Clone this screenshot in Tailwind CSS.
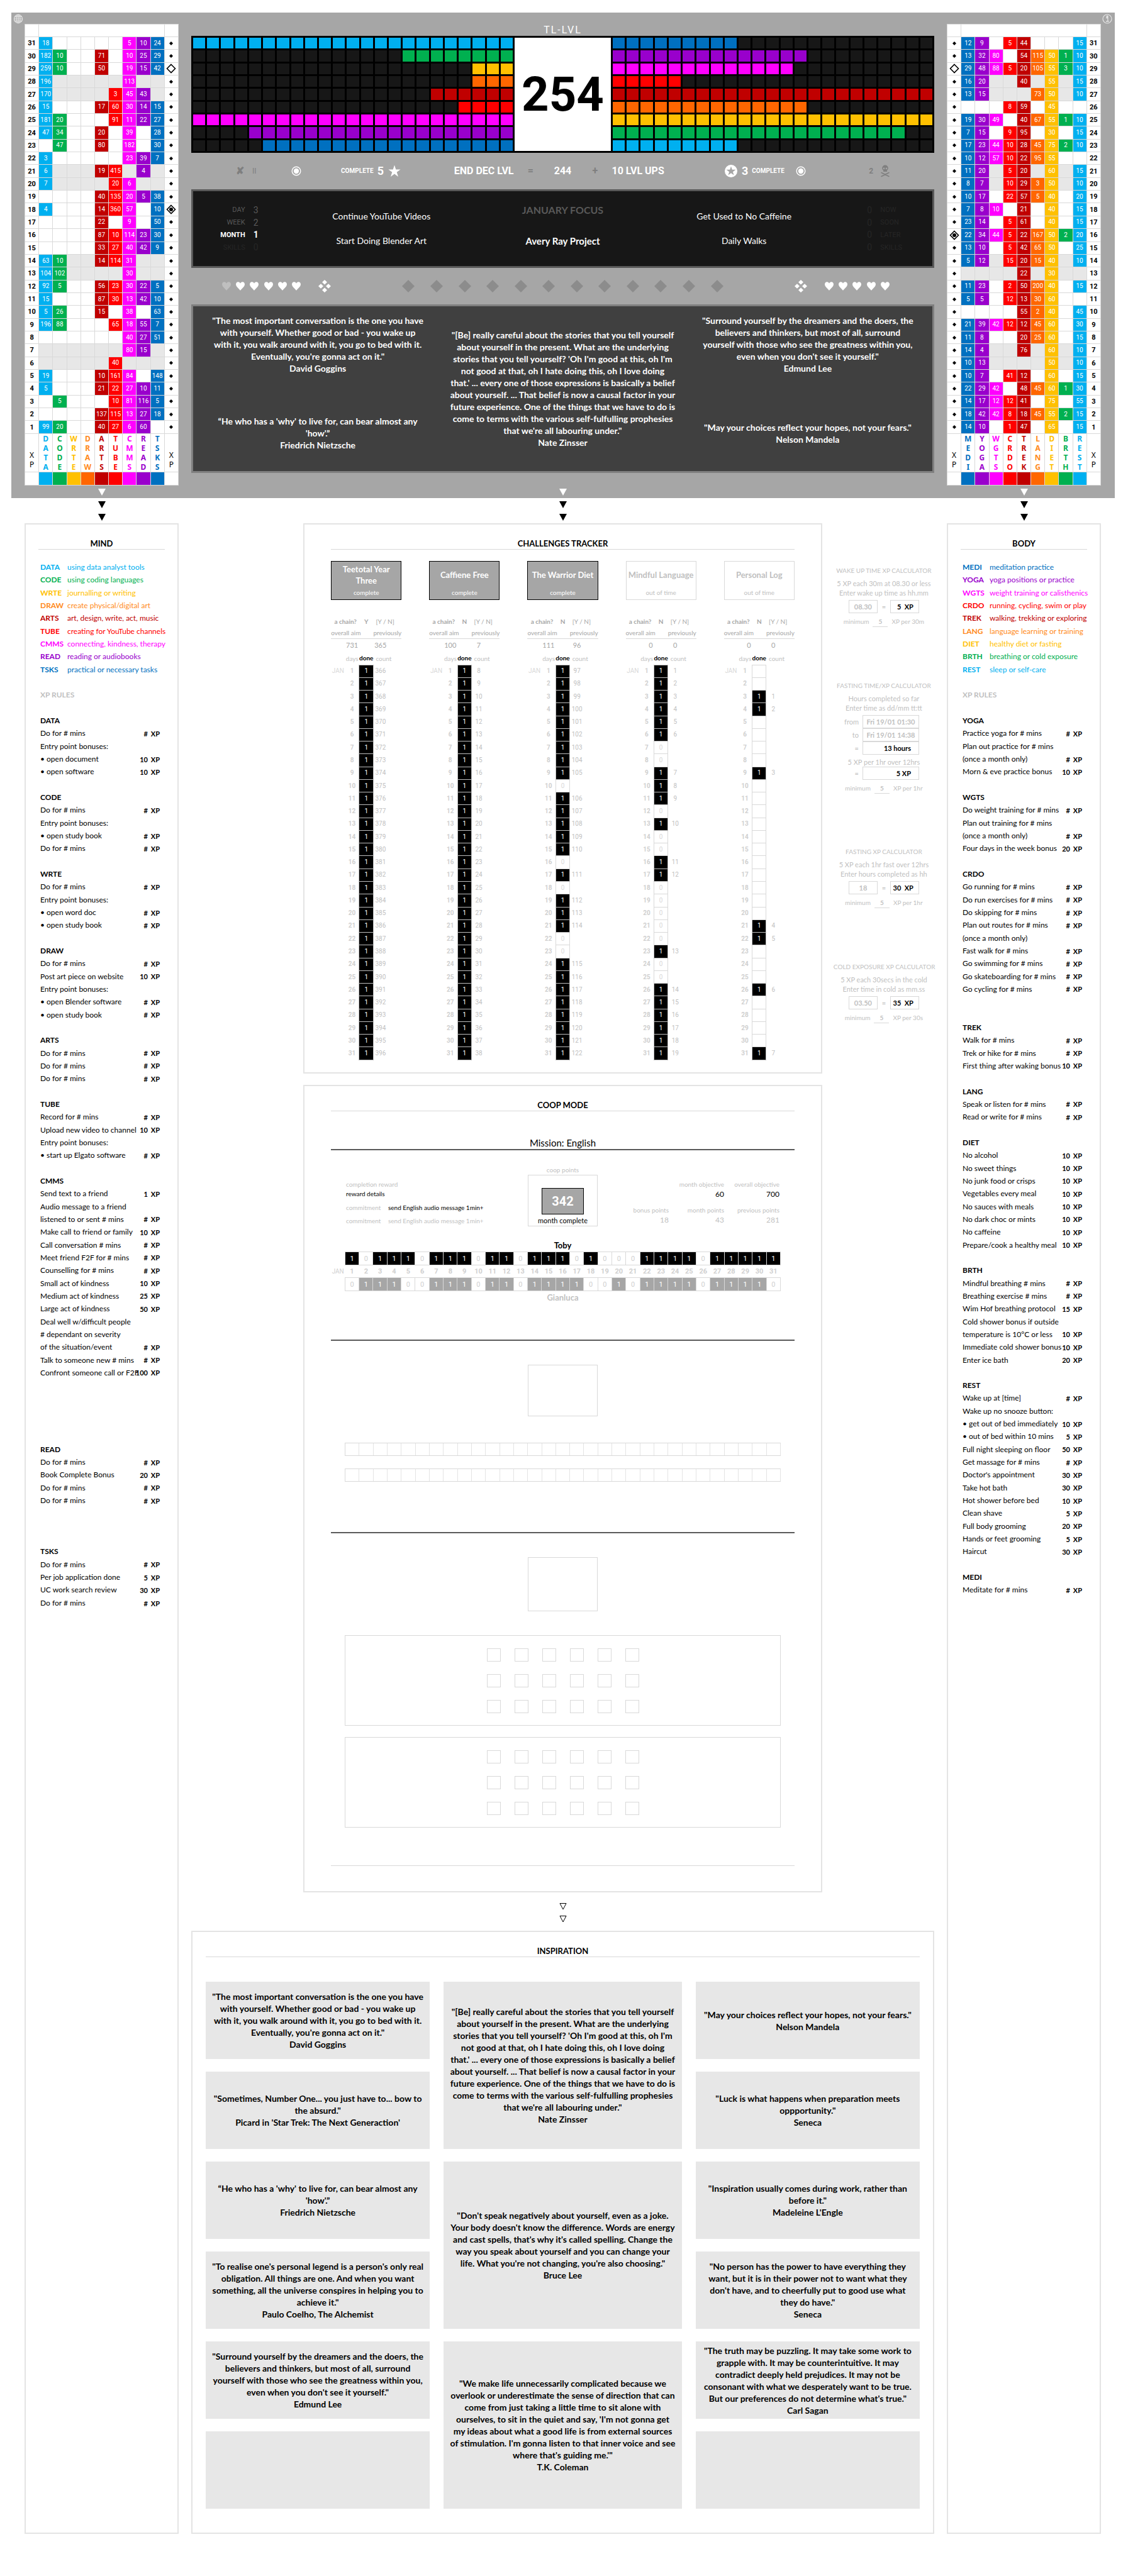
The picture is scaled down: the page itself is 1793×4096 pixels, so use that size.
<!DOCTYPE html>
<html lang="en">
<head>
<meta charset="utf-8">
<title>TL-LVL Dashboard</title>
<script src="https://cdn.jsdelivr.net/npm/@tailwindcss/browser@4"></script>
</head>
<body class="bg-white font-['Lato','Noto_Sans',sans-serif] text-black">
<main class="pt-5 pr-[21px] pl-[18px] pb-[68px]">

  <header class="bg-[#a6a6a6] pl-[21px] pr-[22px]">
    <div class="grid grid-cols-[245fr_1181fr_245fr] gap-x-5">
      <div class="relative pt-[18px]">
        <svg class="absolute -left-[18px] top-[2px] size-4 stroke-[#e4e4e4] fill-none" viewBox="0 0 16 16" stroke-width="1.2"><circle cx="8" cy="8" r="6.6"/><ellipse cx="8" cy="8" rx="3" ry="6.6"/><path d="M8 1.4v13.2M1.4 8h13.2M2.5 4.6h11M2.5 11.4h11"/></svg>
        <table id="mindHeat" class="h-[734px] w-full table-fixed border-collapse bg-white text-center font-['Roboto',sans-serif] text-[10px] leading-none"></table>
      </div>

      <div class="pt-[18px]">
        <p class="flex h-[19px] items-center justify-center font-['Roboto',sans-serif] text-base leading-none tracking-[2px] text-white">TL-LVL</p>
        <section class="grid h-[186px] grid-cols-[514fr_153fr_514fr] bg-black" aria-label="Level progress">
          <div id="mindBars" class="grid grid-cols-[repeat(23,minmax(0,1fr))] gap-[3px] p-[3px]"></div>
          <div class="my-[3px] flex items-center justify-center bg-white font-['Roboto',sans-serif] text-[76px] font-bold leading-none">254</div>
          <div id="bodyBars" class="grid grid-cols-[repeat(23,minmax(0,1fr))] gap-[3px] p-[3px]"></div>
        </section>

        <div class="grid h-[58px] grid-cols-[repeat(53,minmax(0,1fr))] items-center whitespace-nowrap font-['Roboto',sans-serif] text-base font-bold leading-none text-white">
          <span class="col-start-4 row-start-1 justify-self-center text-[#7f7f7f]">✘</span>
          <span class="col-start-5 row-start-1 justify-self-center text-xs font-normal text-[#7f7f7f]">II</span>
          <svg class="col-start-8 row-start-1 size-4 justify-self-center" viewBox="0 0 16 16"><circle cx="8" cy="8" r="6.8" fill="none" stroke="#fff" stroke-width="1.4"/><circle cx="8" cy="8" r="4.2" fill="#fff"/></svg>
          <span class="col-span-2 col-start-12 row-start-1 justify-self-end text-[10px]">COMPLETE</span>
          <span class="col-start-14 row-start-1 justify-self-center text-lg leading-none">5</span>
          <svg class="col-start-15 row-start-1 size-5 justify-self-center fill-white" viewBox="0 0 20 20"><path d="M10 .5l2.300 7h7.300l-5.900 4.300 2.300 7.200L10 14.600 4 19l2.300-7.200L.4 7.500h7.300z"/></svg>
          <span class="col-span-5 col-start-19 row-start-1 justify-self-end">END DEC LVL</span>
          <span class="col-start-25 row-start-1 justify-self-start text-[#7f7f7f]">=</span>
          <span class="col-span-3 col-start-26 row-start-1 justify-self-center">244</span>
          <span class="col-start-29 row-start-1 justify-self-end text-[#7f7f7f]">+</span>
          <span class="col-span-5 col-start-31 row-start-1">10 LVL UPS</span>
          <svg class="col-start-39 row-start-1 size-5 justify-self-center" viewBox="0 0 20 20"><circle cx="10" cy="10" r="10" fill="#fff"/><path fill="#a6a6a6" d="M10 2.400l1.800 5.400h5.700l-4.600 3.400 1.700 5.400-4.600-3.300-4.600 3.300 1.700-5.400-4.600-3.400h5.700z"/></svg>
          <span class="col-start-40 row-start-1 justify-self-center text-lg leading-none">3</span>
          <span class="col-span-2 col-start-41 row-start-1 text-[10px]">COMPLETE</span>
          <svg class="col-start-44 row-start-1 size-4 justify-self-center" viewBox="0 0 16 16"><circle cx="8" cy="8" r="6.8" fill="none" stroke="#fff" stroke-width="1.4"/><circle cx="8" cy="8" r="4.2" fill="#fff"/></svg>
          <span class="col-start-49 row-start-1 justify-self-center text-xs text-[#7f7f7f]">2</span>
          <svg class="col-start-50 row-start-1 h-5 w-4 justify-self-center" viewBox="0 0 16 20" fill="#7f7f7f"><path d="M8 .5a4.800 4.800 0 0 0-4.800 4.800c0 1.600.7 2.800 1.900 3.600V11h5.800V8.900c1.200-.8 1.900-2 1.900-3.600A4.800 4.800 0 0 0 8 .5zM6 4.600a1.300 1.300 0 1 1 0 2.600 1.300 1.300 0 0 1 0-2.600zm4 0a1.300 1.300 0 1 1 0 2.600 1.300 1.300 0 0 1 0-2.600z" fill-rule="evenodd"/><path d="M2 12.500l12 6M14 12.500l-12 6" stroke="#7f7f7f" stroke-width="1.600" stroke-linecap="round"/></svg>
        </div>

        <section class="grid h-[125px] grid-cols-[repeat(53,minmax(0,1fr))] grid-rows-4 items-center whitespace-nowrap border-[3px] border-[#595959] bg-[#171717] py-5 text-white" aria-label="Focus">
          <span class="col-span-4 col-start-1 row-start-1 justify-self-end pr-1.5 font-['Roboto',sans-serif] text-[11px] leading-none text-[#595959]">DAY</span>
          <span class="col-start-5 row-start-1 justify-self-center font-['Roboto',sans-serif] text-sm leading-none text-[#595959]">3</span>
          <span class="col-span-4 col-start-1 row-start-2 justify-self-end pr-1.5 font-['Roboto',sans-serif] text-[11px] leading-none text-[#595959]">WEEK</span>
          <span class="col-start-5 row-start-2 justify-self-center font-['Roboto',sans-serif] text-sm leading-none text-[#595959]">2</span>
          <span class="col-span-4 col-start-1 row-start-3 justify-self-end pr-1.5 font-['Roboto',sans-serif] text-[11px] font-bold leading-none">MONTH</span>
          <span class="col-start-5 row-start-3 justify-self-center font-['Roboto',sans-serif] text-sm font-bold leading-none">1</span>
          <span class="col-span-4 col-start-1 row-start-4 justify-self-end pr-1.5 font-['Roboto',sans-serif] text-[11px] leading-none text-[#262626]">SKILLS</span>
          <span class="col-start-5 row-start-4 justify-self-center font-['Roboto',sans-serif] text-sm leading-none text-[#262626]">0</span>
          <span class="col-span-13 col-start-8 row-span-2 row-start-1 justify-self-center text-sm">Continue YouTube Videos</span>
          <span class="col-span-13 col-start-8 row-span-2 row-start-3 justify-self-center text-sm">Start Doing Blender Art</span>
          <h2 class="col-span-13 col-start-21 row-start-1 justify-self-center text-base font-bold leading-none text-[#595959]">JANUARY FOCUS</h2>
          <strong class="col-span-13 col-start-21 row-span-2 row-start-3 justify-self-center text-[15px]">Avery Ray Project</strong>
          <span class="col-span-13 col-start-34 row-span-2 row-start-1 justify-self-center text-sm">Get Used to No Caffeine</span>
          <span class="col-span-13 col-start-34 row-span-2 row-start-3 justify-self-center text-sm">Daily Walks</span>
          <span class="col-start-49 row-start-1 justify-self-center font-['Roboto',sans-serif] text-sm leading-none text-[#262626]">0</span>
          <span class="col-span-4 col-start-50 row-start-1 pl-1.5 font-['Roboto',sans-serif] text-[11px] leading-none text-[#262626]">NOW</span>
          <span class="col-start-49 row-start-2 justify-self-center font-['Roboto',sans-serif] text-sm leading-none text-[#262626]">0</span>
          <span class="col-span-4 col-start-50 row-start-2 pl-1.5 font-['Roboto',sans-serif] text-[11px] leading-none text-[#262626]">SOON</span>
          <span class="col-start-49 row-start-3 justify-self-center font-['Roboto',sans-serif] text-sm leading-none text-[#262626]">0</span>
          <span class="col-span-4 col-start-50 row-start-3 pl-1.5 font-['Roboto',sans-serif] text-[11px] leading-none text-[#262626]">LATER</span>
          <span class="col-start-49 row-start-4 justify-self-center font-['Roboto',sans-serif] text-sm leading-none text-[#262626]">0</span>
          <span class="col-span-4 col-start-50 row-start-4 pl-1.5 font-['Roboto',sans-serif] text-[11px] leading-none text-[#262626]">SKILLS</span>
        </section>

        <div id="hearts" class="grid h-[58px] grid-cols-[repeat(53,minmax(0,1fr))] place-items-center"></div>

        <section id="pinned" class="grid h-[268px] grid-cols-[16fr_17fr_16fr] grid-rows-2 gap-x-[22px] gap-y-5 border-[3px] border-[#7f7f7f] bg-[#404040] px-5 text-center text-sm font-bold leading-[19px] text-white"></section>
      </div>

      <div class="relative pt-[18px]">
        <svg class="absolute -right-[18px] top-[2px] size-4" viewBox="0 0 16 16"><circle cx="8" cy="8" r="7" fill="none" stroke="#e4e4e4" stroke-width="1.200"/><path d="M6.200 6.500h2.700v5.300M6 12h4.600M7.300 3.500h1.600v1.600H7.300z" fill="none" stroke="#e4e4e4" stroke-width="1.300"/></svg>
        <table id="bodyHeat" class="h-[734px] w-full table-fixed border-collapse bg-white text-center font-['Roboto',sans-serif] text-[10px] leading-none"></table>
      </div>
    </div>
    <div class="grid h-5 grid-cols-[245fr_1181fr_245fr] place-items-center gap-x-5 fill-white">
      <svg class="h-[11px] w-3" viewBox="0 0 12 11"><path d="M0 0h12L6 11z"/></svg>
      <svg class="h-[11px] w-3" viewBox="0 0 12 11"><path d="M0 0h12L6 11z"/></svg>
      <svg class="h-[11px] w-3" viewBox="0 0 12 11"><path d="M0 0h12L6 11z"/></svg>
    </div>
  </header>

  <div class="grid h-10 grid-cols-[245fr_1181fr_245fr] grid-rows-2 place-items-center gap-x-5 pl-[21px] pr-[22px]">
    <svg class="h-[11px] w-3" viewBox="0 0 12 11"><path d="M0 0h12L6 11z"/></svg>
    <svg class="h-[11px] w-3" viewBox="0 0 12 11"><path d="M0 0h12L6 11z"/></svg>
    <svg class="h-[11px] w-3" viewBox="0 0 12 11"><path d="M0 0h12L6 11z"/></svg>
    <svg class="h-[11px] w-3" viewBox="0 0 12 11"><path d="M0 0h12L6 11z"/></svg>
    <svg class="h-[11px] w-3" viewBox="0 0 12 11"><path d="M0 0h12L6 11z"/></svg>
    <svg class="h-[11px] w-3" viewBox="0 0 12 11"><path d="M0 0h12L6 11z"/></svg>
  </div>

  <div class="grid grid-cols-[245fr_1181fr_245fr] gap-x-5 pl-[21px] pr-[22px]">
    <section class="border-2 border-[#e4e4e4] px-5 pt-[22px] text-xs">
      <h2 class="h-[18px] border-b border-[#d9d9d9] text-center text-[13px] font-bold leading-[16px]">MIND</h2>
      <table id="mindRules" class="mt-[18px] h-[1668px] w-full table-fixed border-collapse leading-none"></table>
    </section>

    <div class="flex flex-col">
      <div class="grid grid-cols-[minmax(0,178fr)_minmax(0,824fr)_minmax(0,178fr)]">
        <section class="col-start-2 h-[875px] border-2 border-[#e4e4e4] px-[42px] pt-[22px]">
          <h2 class="h-[18px] border-b border-[#d9d9d9] text-center text-[13px] font-bold leading-[16px]">CHALLENGES TRACKER</h2>
          <div id="challenges" class="mt-[18px] grid grid-cols-[repeat(5,minmax(0,1fr))] gap-x-11"></div>
        </section>
        <aside id="calcs" class="pl-[18px] pt-[66px] text-center text-[11px] leading-[15px] text-[#bfbfbf]"></aside>
      </div>

      <section class="mx-[178px] mt-[18px] h-[1284px] border-2 border-[#e4e4e4] px-[42px] pt-[22px]">
        <h2 class="h-[18px] border-b border-[#d9d9d9] text-center text-[13px] font-bold leading-[16px]">COOP MODE</h2>
        <h3 class="mt-[42px] h-[20px] border-b-2 border-[#595959] text-center text-[15px] leading-[17px]">Mission: English</h3>
        <div class="mt-[24px] grid grid-cols-[minmax(0,290fr)_111px_minmax(0,290fr)] px-[24px] text-[10px] leading-[15px]">
          <div class="pt-[23px] text-[#bfbfbf]">
            <p>completion reward</p>
            <p class="text-black">reward details</p>
            <p class="mt-[7px] flex gap-3 whitespace-nowrap"><span class="w-[55px]">commitment</span><span class="text-black">send English audio message 1min+</span></p>
            <p class="mt-[6px] flex gap-3 whitespace-nowrap"><span class="w-[55px]">commitment</span><span>send English audio message 1min+</span></p>
          </div>
          <div class="text-center">
            <p class="text-[#bfbfbf]">coop points</p>
            <div class="flex h-[82px] flex-col items-center border border-[#d9d9d9] pt-5">
              <p class="flex h-[42px] w-[67px] items-center justify-center border border-black bg-[#a6a6a6] font-['Roboto',sans-serif] text-xl font-bold text-white">342</p>
              <p class="mt-[2px] text-[11px]">month complete</p>
            </div>
          </div>
          <dl class="grid grid-cols-[1fr_88px_88px] content-start whitespace-nowrap pt-[23px] text-right text-[#bfbfbf]">
            <dt class="col-start-2">month objective</dt><dt>overall objective</dt>
            <dd class="col-start-2 text-xs leading-[15px] text-black">60</dd><dd class="text-xs leading-[15px] text-black">700</dd>
            <dt class="mt-[11px]">bonus points</dt><dt class="mt-[11px]">month points</dt><dt class="mt-[11px]">previous points</dt>
            <dd class="text-xs leading-[15px]">18</dd><dd class="text-xs leading-[15px]">43</dd><dd class="text-xs leading-[15px]">281</dd>
          </dl>
        </div>
        <table class="mt-[21px] w-full table-fixed border-collapse text-center font-['Roboto',sans-serif] text-[11px] leading-none">
          <caption class="h-[19px] font-['Lato',sans-serif] text-[13px] font-bold leading-[19px]">Toby</caption>
          <tbody id="coop"></tbody>
        </table>
        <p class="mt-[1px] text-center text-[13px] font-bold leading-[18px] text-[#bfbfbf]">Gianluca</p>
        <hr class="mt-[58px] border-t-2 border-[#595959]">
        <div class="mx-auto mt-[38px] h-[82px] w-[111px] border border-[#d9d9d9]"></div>
        <div class="mx-[22px] mt-[42px] grid h-[21px] grid-cols-[repeat(31,minmax(0,1fr))] border-y border-l border-[#d9d9d9]" data-cells="31"></div>
        <div class="mx-[22px] mt-[20px] grid h-[21px] grid-cols-[repeat(31,minmax(0,1fr))] border-y border-l border-[#d9d9d9]" data-cells="31"></div>
        <hr class="mt-[80px] border-t-2 border-[#595959]">
        <div class="mx-auto mt-[38px] h-[86px] w-[111px] border border-[#d9d9d9]"></div>
        <div class="mx-[22px] mt-[38px] grid h-[144px] grid-cols-[repeat(6,22px)] content-center justify-center gap-x-[22px] gap-y-[20px] border border-[#d9d9d9]" data-boxes="18"></div>
        <div class="mx-[22px] mt-[18px] grid h-[144px] grid-cols-[repeat(6,22px)] content-center justify-center gap-x-[22px] gap-y-[20px] border border-[#d9d9d9]" data-boxes="18"></div>
        <hr class="mt-[60px] border-t border-[#d9d9d9]">
      </section>

      <div class="flex h-[61px] flex-col items-center justify-center gap-[9px] pt-1">
        <svg class="h-[11px] w-3 fill-none stroke-black" viewBox="0 0 12 11"><path d="M1 .5h10L6 10z"/></svg>
        <svg class="h-[11px] w-3 fill-none stroke-black" viewBox="0 0 12 11"><path d="M1 .5h10L6 10z"/></svg>
      </div>

      <section class="flex-1 border-2 border-[#e4e4e4] px-[21px] pb-[38px] pt-[22px]">
        <h2 class="h-[18px] border-b border-[#d9d9d9] text-center text-[13px] font-bold leading-[16px]">INSPIRATION</h2>
        <div id="inspiration" class="mt-[39px] grid grid-cols-[16fr_17fr_16fr] grid-rows-[repeat(6,123px)] gap-x-[22px] gap-y-[20px] text-center text-sm font-bold leading-[19px]"></div>
      </section>
    </div>

    <section class="border-2 border-[#e4e4e4] px-5 pt-[22px] text-xs">
      <h2 class="h-[18px] border-b border-[#d9d9d9] text-center text-[13px] font-bold leading-[16px]">BODY</h2>
      <table id="bodyRules" class="mt-[18px] h-[1668px] w-full table-fixed border-collapse leading-none"></table>
    </section>
  </div>
</main>

<script>
const $ = id => document.getElementById(id);
const BG = {blue:'bg-[#00b0f0]',green:'bg-[#00b050]',gold:'bg-[#ffc000]',orange:'bg-[#ff6600]',maroon:'bg-[#c00000]',red:'bg-[#ff0000]',pink:'bg-[#ff00ff]',purple:'bg-[#9900cc]',navy:'bg-[#0070c0]'};
const FG = {blue:'text-[#00b0f0]',green:'text-[#00b050]',gold:'text-[#ffc000]',orange:'text-[#ff8a20]',maroon:'text-[#c00000]',red:'text-[#ff0000]',pink:'text-[#ff00ff]',purple:'text-[#9900cc]',navy:'text-[#0070c0]'};
const mindCols = [['DATA','blue','using data analyst tools'],['CODE','green','using coding languages'],['WRTE','gold','journalling or writing'],['DRAW','orange','create physical/digital art'],['ARTS','maroon','art, design, write, act, music'],['TUBE','red','creating for YouTube channels'],['CMMS','pink','connecting, kindness, therapy'],['READ','purple','reading or audiobooks'],['TSKS','navy','practical or necessary tasks']];
const bodyCols = [['MEDI','navy','meditation practice'],['YOGA','purple','yoga positions or practice'],['WGTS','pink','weight training or calisthenics'],['CRDO','red','running, cycling, swim or play'],['TREK','maroon','walking, trekking or exploring'],['LANG','orange','language learning or training'],['DIET','gold','healthy diet or fasting'],['BRTH','green','breathing or cold exposure'],['REST','blue','sleep or self-care']];
const mindXP = `18 . . . . . 5 10 24
182 10 . . 71 . 10 25 29
259 10 . . 50 . 19 15 42
196 . . . . . 113 . .
170 . . . . 3 45 43 .
15 . . . 17 60 30 14 15
181 20 . . . 91 11 22 27
47 34 . . 20 . 39 . 28
. 47 . . 80 . 182 . 30
3 . . . . . 23 39 7
6 . . . 19 415 . 4 .
7 . . . . 20 6 . .
. . . . 40 135 20 5 38
4 . . . 14 360 57 . 10
. . . . 22 . 9 . 50
. . . . 87 10 114 23 30
. . . . 33 27 40 42 9
63 10 . . 14 114 31 . .
104 102 . . . . 30 . .
92 5 . . 56 23 30 22 5
15 . . . 87 30 13 42 10
5 26 . . 15 . 38 . 63
196 88 . . . 65 18 55 7
. . . . . . 40 27 51
. . . . . . 80 15 .
. . . . . 40 . . .
19 . . . 10 161 84 . 148
5 . . . 21 22 27 10 11
. 5 . . . 10 81 116 5
. . . . 137 115 13 27 18
99 20 . . 40 27 6 60 .`;
const bodyXP = `12 9 . 5 44 . . . 15
13 32 80 . 54 115 50 1 10
29 48 88 5 20 105 55 3 10
16 20 . . 40 . 55 . 15
13 15 . . . 73 50 . 10
. . . 8 59 . 45 . .
19 30 49 . 40 67 55 1 10
7 15 . 9 95 . 30 . 15
17 23 44 10 28 45 75 2 10
10 12 57 10 22 95 55 . .
11 20 . 5 20 . 60 . 15
8 7 . 10 29 3 50 . 10
10 17 . 22 57 5 40 . 20
7 8 10 . 21 . 40 . 15
23 14 . 5 61 . 40 . 15
22 34 44 5 22 167 50 2 20
13 10 . 5 42 65 50 . 25
5 12 . 15 20 15 40 . 10
. . . . 22 . 30 . .
11 23 . 2 50 200 40 . 15
5 5 . 12 13 30 60 . .
. . . . 55 2 40 . 45
21 39 42 12 12 45 60 . 30
11 8 . . 20 25 60 . 15
14 4 . . 76 . 60 . 10
10 13 . . . . 50 . 10
10 7 . 41 12 . 60 . 15
22 29 42 . 48 45 60 1 30
14 17 12 12 41 . 75 . 55
18 42 42 8 18 45 55 2 15
14 10 . 1 47 . 65 . 15`;
const weekend = [28,27,21,20,14,13,7,6];
const MARK = {
  dot:'<svg class="mx-auto size-[6px]" viewBox="0 0 6 6"><path d="M3 0l3 3-3 3-3-3z"/></svg>',
  open:'<svg class="mx-auto -my-1 size-4" viewBox="0 0 16 16"><path d="M8 1.500l6.500 6.500L8 14.500 1.500 8z" fill="#fff" stroke="#000" stroke-width="1.600"/></svg>',
  target:'<svg class="mx-auto -my-1 size-4" viewBox="0 0 16 16"><path d="M8 1.500l6.500 6.500L8 14.500 1.500 8z" fill="#fff" stroke="#000" stroke-width="1.600"/><circle cx="8" cy="8" r="3"/></svg>'
};
function heat(id, cols, data, flip, target) {
  const B = 'border border-[#d9d9d9]';
  const side = (a, b) => flip ? [b, a] : [a, b];
  const blank = `<td class="${B}"></td>`;
  let h = `<tr class="h-5">${blank}<td colspan="9" class="${B}"></td>${blank}</tr>`;
  data.split('\n').forEach((line, i) => {
    const day = 31 - i;
    const mark = day === 29 ? MARK.open : day === target ? MARK.target : MARK.dot;
    const [l, r] = side(`<th scope="row" class="${B} text-[11px] font-bold">${day}</th>`, `<td class="${B}">${mark}</td>`);
    h += `<tr>${l}${line.split(' ').map((v, c) => v === '.' ? `<td class="${B} ${weekend.includes(day) ? 'bg-[#e7e7e7]' : ''}"></td>` : `<td class="${B} ${BG[cols[c][1]]} text-white">${v}</td>`).join('')}${r}</tr>`;
  });
  const xp = `<td class="${B} pb-1 align-bottom font-['Noto_Sans',sans-serif] text-xs leading-[15px]">X<br>P</td>`;
  h += `<tr class="h-[61px]">${xp}${cols.map(c => `<th scope="col" class="${B} ${FG[c[1]]} font-['Noto_Sans',sans-serif] text-xs font-bold leading-[15px]">${[...c[0]].join('<br>')}</th>`).join('')}${xp}</tr>`;
  h += `<tr class="h-[21px]">${blank}${cols.map(c => `<td class="${B} ${BG[c[1]]}"></td>`).join('')}${blank}</tr>`;
  $(id).innerHTML = h;
}
heat('mindHeat', mindCols, mindXP, false, 18);
heat('bodyHeat', bodyCols, bodyXP, true, 16);

function bars(id, cols, counts, fromRight) {
  $(id).innerHTML = counts.map((n, r) => Array.from({length: 23}, (_, i) => {
    const on = fromRight ? i >= 23 - n : i < n;
    return `<i class="${on ? BG[cols[r][1]] : 'bg-[#171717]'}"></i>`;
  }).join('')).join('');
}
bars('mindBars', mindCols, [23,8,3,3,6,4,23,19,18], true);
bars('bodyBars', bodyCols, [9,14,13,5,23,14,23,21,9], false);

const heart = c => `<svg class="h-[14px] w-4 ${c}" viewBox="0 0 16 14"><path d="M8 14C6.500 11.500 1 8 1 4 1 1.500 2.700.2 4.500.2 6.200.2 7.500 1.300 8 2.800 8.500 1.300 9.800.2 11.500.2 13.300.2 15 1.500 15 4c0 4-5.500 7.500-7 10z"/></svg>`;
const diamond = '<svg class="h-5 w-5 fill-[#8c8c8c]" viewBox="0 0 20 20"><path d="M10 0l10 10-10 10L0 10z"/></svg>';
const quad = '<svg class="size-5 fill-white" viewBox="0 0 20 20"><path d="M10 0l4 3.700-4 3.700-4-3.700zM10 12.600l4 3.700-4 3.700-4-3.700zM4 6.200l4 3.800-4 3.800L0 10zM16 6.200l4 3.800-4 3.800-4-3.800z"/></svg>';
$('hearts').innerHTML = Array.from({length: 53}, (_, i) => {
  const k = i + 1;
  let s = '';
  if (k === 3) s = heart('fill-[#bfbfbf]');
  else if ((k > 3 && k < 9) || (k > 45 && k < 51)) s = heart('fill-white');
  else if (k === 10 || k === 44) s = quad;
  else if (k >= 16 && k <= 38 && k % 2 === 0) s = diamond;
  return `<span>${s}</span>`;
}).join('');

const Q = {
  goggins: ['"The most important conversation is the one you have','with yourself. Whether good or bad - you wake up','with it, you walk around with it, you go to bed with it.','Eventually, you\'re gonna act on it."','David Goggins'],
  zinsser: ['"[Be] really careful about the stories that you tell yourself','about yourself in the present. What are the underlying','stories that you tell yourself? \'Oh I\'m good at this, oh I\'m','not good at that, oh I hate doing this, oh I love doing','that.\' ... every one of those expressions is basically a belief','about yourself. ... That belief is now a causal factor in your','future experience. One of the things that we have to do is','come to terms with the various self-fulfulling prophesies','that we\'re all labouring under."','Nate Zinsser'],
  lund: ['"Surround yourself by the dreamers and the doers, the','believers and thinkers, but most of all, surround','yourself with those who see the greatness within you,','even when you don\'t see it yourself."','Edmund Lee'],
  nietzsche: ['“He who has a \'why\' to live for, can bear almost any','\'how\'.”','Friedrich Nietzsche'],
  mandela: ['"May your choices reflect your hopes, not your fears."','Nelson Mandela'],
  picard: ['"Sometimes, Number One... you just have to... bow to','the absurd."','Picard in \'Star Trek: The Next Generaction\''],
  seneca1: ['"Luck is what happens when preparation meets','oppportunity."','Seneca'],
  bruce: ['"Don\'t speak negatively about yourself, even as a joke.','Your body doesn\'t know the difference. Words are energy','and cast spells, that\'s why it\'s called spelling. Change the','way you speak about yourself and you can change your','life. What you\'re not changing, you\'re also choosing."','Bruce Lee'],
  lengle: ['"Inspiration usually comes during work, rather than','before it."','Madeleine L\'Engle'],
  coelho: ['"To realise one\'s personal legend is a person\'s only real','obligation. All things are one. And when you want','something, all the universe conspires in helping you to','achieve it."','Paulo Coelho, The Alchemist'],
  seneca2: ['"No person has the power to have everything they','want, but it is in their power not to want what they','don\'t have, and to cheerfully put to good use what','they do have."','Seneca'],
  coleman: ['"We make life unnecessarily complicated because we','overlook or underestimate the sense of direction that can','come from just taking a little time to sit alone with','ourselves, to sit in the quiet and say, \'I\'m not gonna get','my ideas about what a good life is from external sources','of stimulation. I\'m gonna listen to that inner voice and see','where that\'s guiding me.\'"','T.K. Coleman'],
  sagan: ['"The truth may be puzzling. It may take some work to','grapple with. It may be counterintuitive. It may','contradict deeply held prejudices. It may not be','consonant with what we desperately want to be true.','But our preferences do not determine what\'s true."','Carl Sagan'],
  none: []
};
const quote = (k, cls) => `<blockquote class="flex min-w-0 flex-col items-center justify-center whitespace-nowrap ${cls}">${Q[k].map(l => `<span>${l}</span>`).join('')}</blockquote>`;
$('pinned').innerHTML = quote('goggins','') + quote('zinsser','row-span-2') + quote('lund','') + quote('nietzsche','') + quote('mandela','');
const g = 'bg-[#e7e7e7]';
$('inspiration').innerHTML = quote('goggins',g) + quote('zinsser',g+' row-span-2') + quote('mandela',g) + quote('picard',g) + quote('seneca1',g)
  + quote('nietzsche',g) + quote('bruce',g+' row-span-2') + quote('lengle',g) + quote('coelho',g) + quote('seneca2',g)
  + quote('lund',g) + quote('coleman',g+' row-span-2') + quote('sagan',g) + quote('none',g) + quote('none',g);

function rules(id, cols, text) {
  let h = '<colgroup><col class="w-[46px]"><col><col class="w-6"><col class="w-[25px]"></colgroup>';
  cols.forEach(c => h += `<tr class="${FG[c[1]]}"><th scope="row" class="pl-[3px] text-left font-bold">${c[0]}</th><td colspan="3" class="whitespace-nowrap">${c[2]}</td></tr>`);
  text.split('\n').forEach(l => {
    if (!l) h += '<tr><td colspan="4">&nbsp;</td></tr>';
    else if (l === 'XP RULES') h += `<tr><th colspan="4" class="pl-[3px] text-left font-bold text-[#bfbfbf]">${l}</th></tr>`;
    else if (/^[A-Z]{4}$/.test(l)) h += `<tr><th colspan="4" class="pl-[3px] text-left font-bold">${l}</th></tr>`;
    else {
      const [t, n] = l.split('|');
      h += `<tr><td colspan="2" class="pl-[3px] whitespace-nowrap">${t}</td><td class="pr-0.5 text-right text-[11px] font-bold leading-none">${n || ''}</td><td class="pr-2 text-right text-[11px] font-bold leading-none">${n ? 'XP' : ''}</td></tr>`;
    }
  });
  $(id).innerHTML = h;
}
rules('mindRules', mindCols, `
XP RULES

DATA
Do for # mins|#
Entry point bonuses:
• open document|10
• open software|10

CODE
Do for # mins|#
Entry point bonuses:
• open study book|#
Do for # mins|#

WRTE
Do for # mins|#
Entry point bonuses:
• open word doc|#
• open study book|#

DRAW
Do for # mins|#
Post art piece on website|10
Entry point bonuses:
• open Blender software|#
• open study book|#

ARTS
Do for # mins|#
Do for # mins|#
Do for # mins|#

TUBE
Record for # mins|#
Upload new video to channel|10
Entry point bonuses:
• start up Elgato software|#

CMMS
Send text to a friend|1
Audio message to a friend
listened to or sent # mins|#
Make call to friend or family|10
Call conversation # mins|#
Meet friend F2F for # mins|#
Counselling for # mins|#
Small act of kindness|10
Medium act of kindness|25
Large act of kindness|50
Deal well w/difficult people
# dependant on severity
of the situation/event|#
Talk to someone new # mins|#
Confront someone call or F2F|100





READ
Do for # mins|#
Book Complete Bonus|20
Do for # mins|#
Do for # mins|#



TSKS
Do for # mins|#
Per job application done|5
UC work search review|30
Do for # mins|#`);
rules('bodyRules', bodyCols, `
XP RULES

YOGA
Practice yoga for # mins|#
Plan out practice for # mins
(once a month only)|#
Morn & eve practice bonus|10

WGTS
Do weight training for # mins|#
Plan out training for # mins
(once a month only)|#
Four days in the week bonus|20

CRDO
Go running for # mins|#
Do run exercises for # mins|#
Do skipping for # mins|#
Plan out routes for # mins|#
(once a month only)
Fast walk for # mins|#
Go swimming for # mins|#
Go skateboarding for # mins|#
Go cycling for # mins|#


TREK
Walk for # mins|#
Trek or hike for # mins|#
First thing after waking bonus|10

LANG
Speak or listen for # mins|#
Read or write for # mins|#

DIET
No alcohol|10
No sweet things|10
No junk food or crisps|10
Vegetables every meal|10
No sauces with meals|10
No dark choc or mints|10
No caffeine|10
Prepare/cook a healthy meal|10

BRTH
Mindful breathing # mins|#
Breathing exercise # mins|#
Wim Hof breathing protocol|15
Cold shower bonus if outside
temperature is 10°C or less|10
Immediate cold shower bonus|10
Enter ice bath|20

REST
Wake up at [time]|#
Wake up no snooze button:
• get out of bed immediately|10
• out of bed within 10 mins|5
Full night sleeping on floor|50
Get massage for # mins|#
Doctor's appointment|30
Take hot bath|30
Hot shower before bed|10
Clean shave|5
Full body grooming|20
Hands or feet grooming|5
Haircut|30

MEDI
Meditate for # mins|#
`);

const all = '1'.repeat(31);
const ch = [
  ['Teetotal Year<br>Three','complete','Y',731,365,all],
  ['Caffiene Free','complete','N',100,7,all],
  ['The Warrior Diet','complete','N',111,96,'1111111110111110101110011111111'],
  ['Mindful Language','out of time','N',0,0,'1111110011101001100000100111111'],
  ['Personal Log','out of time','N',0,0,'..11....1...........11...1....1']
];
$('challenges').innerHTML = ch.map(([name, st, chain, aim, prev, days]) => {
  let count = prev;
  const done = st === 'complete';
  const rows = [...days].map((v, i) => {
    if (v === '1') count++;
    return `<tr class="h-5"><td class="text-[#d9d9d9]">${i ? '' : 'JAN'}</td><td class="font-bold text-[#d0d0d0]">${i + 1}</td>`
      + (v === '1' ? `<td class="border border-[#bfbfbf] bg-black text-white">1</td><td class="text-[#bfbfbf]">${count}</td>` : `<td class="border border-[#d9d9d9] text-[#d9d9d9]">${v === '0' ? 0 : ''}</td><td></td>`) + '<td></td></tr>';
  }).join('');
  return `<article class="text-center">
    <div class="flex h-[62px] flex-col border ${done ? 'border-black bg-[#a6a6a6] text-white' : 'border-[#d9d9d9] text-[#bfbfbf]'}">
      <h3 class="flex flex-1 items-center justify-center whitespace-nowrap text-[13px] font-bold leading-[18px]">${name.includes('<br>') ? '<span>' + name + '</span>' : name}</h3>
      <p class="h-[19px] text-[10px] leading-[17px]">${st}</p>
    </div>
    <div class="mt-6 grid grid-cols-5 whitespace-nowrap text-[10px] leading-[20px] text-[#a6a6a6]">
      <span class="col-span-2 justify-self-end pr-1 font-bold">a chain?</span><b>${chain}</b><span class="col-span-2 pl-1 text-left">[Y / N]</span>
    </div>
    <div class="flex justify-between whitespace-nowrap border-b border-[#d9d9d9] text-[10px] leading-[17px] text-[#a6a6a6]"><span>overall aim</span><span>previously</span></div>
    <div class="grid grid-cols-[43fr_24fr_23fr_22fr] text-[11px] leading-[20px] text-[#a6a6a6]"><span class="text-right">${aim}</span><span></span><span>${prev}</span></div>
    <table class="h-[650px] w-full table-fixed border-collapse font-['Roboto',sans-serif] text-[10px] leading-none">
      <thead><tr class="h-[21px] font-['Lato',sans-serif]"><th></th><th class="font-normal text-[#bfbfbf]">days</th><th class="font-bold">done</th><th class="pl-1 font-normal text-[#bfbfbf]">count</th><th></th></tr></thead>
      <tbody>${rows}</tbody></table>
  </article>`;
}).join('');

const box = 'h-[21px] border border-[#d9d9d9]';
const minRow = per => `<p class="mt-[6px] flex justify-center gap-[6px] whitespace-nowrap text-[10px] leading-[15px]"><span>minimum</span><b class="w-6 border-b border-[#d9d9d9]">5</b><span>${per}</span></p>`;
const calc = (id, title, l1, l2, val, out, per, mt) => `<form class="${mt}">
  <h3 class="whitespace-nowrap text-[10px] leading-[18px]">${title}</h3>
  <p class="mt-[4px] whitespace-nowrap">${l1}<br>${l2}</p>
  <div class="mx-auto mt-[4px] flex w-[112px] items-center justify-between"><input id="${id}" aria-label="${title}" value="${val}" class="${box} w-[46px] text-center font-bold"><span>=</span><output for="${id}" class="${box} w-[46px] pr-2 text-right font-bold leading-[19px] text-black">${out}</output></div>
  ${minRow(per)}</form>`;
$('calcs').innerHTML = calc('wake','WAKE UP TIME XP CALCULATOR','5 XP each 30m at 08.30 or less','Enter wake up time as hh.mm','08.30','5&nbsp; XP','XP per 30m','')
 + `<form class="mt-[84px]"><h3 class="whitespace-nowrap text-[10px] leading-[18px]">FASTING TIME/XP CALCULATOR</h3>
  <p class="mt-[4px]">Hours completed so far<br>Enter time as dd/mm tt:tt</p>
  <div class="mt-[4px] grid grid-cols-[1fr_90px_18px] items-center gap-x-[6px] text-right">
   <label for="from">from</label><input id="from" value="Fri 19/01 01:30" class="${box} w-full text-center font-bold"><span></span>
   <label for="to">to</label><input id="to" value="Fri 19/01 14:38" class="${box} w-full text-center font-bold"><span></span>
   <span>=</span><output class="${box} pr-3 font-bold leading-[19px] text-black">13 hours</output><span></span>
   <p class="col-span-3 mt-[4px] text-center">5 XP per 1hr over 12hrs</p>
   <span>=</span><output class="${box} pr-3 font-bold leading-[19px] text-black">5 XP</output><span></span>
  </div>
  ${minRow('XP per 1hr')}</form>`
 + calc('fast','FASTING XP CALCULATOR','5 XP each 1hr fast over 12hrs','Enter hours completed as hh','18','30&nbsp; XP','XP per 1hr','mt-[83px]')
 + calc('cold','COLD EXPOSURE XP CALCULATOR','5 XP each 30secs in the cold','Enter time in cold as mm.ss','03.50','35&nbsp; XP','XP per 30s','mt-[84px]');

const toby = '1011101110110111010001111011111', gian = '0111001110110111100101111011110';
const cr = (s, on) => '<tr class="h-[21px]"><td></td>' + [...s].map(v => `<td class="border border-[#d9d9d9] ${v === '1' ? on : 'text-[#d0d0d0]'}">${v}</td>`).join('') + '<td></td></tr>';
$('coop').innerHTML = cr(toby, 'bg-black text-white')
 + '<tr class="h-[20px] text-[#d0d0d0]"><th scope="row" class="text-[10px] font-normal">JAN</th>' + [...toby].map((_, i) => `<td class="font-bold">${i + 1}</td>`).join('') + '<td></td></tr>'
 + cr(gian, 'bg-[#a6a6a6] text-white');
document.querySelectorAll('[data-cells]').forEach(e => e.innerHTML = '<i class="border-r border-[#e4e4e4]"></i>'.repeat(31));
document.querySelectorAll('[data-boxes]').forEach(e => e.innerHTML = '<i class="h-[21px] border border-[#d9d9d9]"></i>'.repeat(18));
</script>
</body>
</html>
